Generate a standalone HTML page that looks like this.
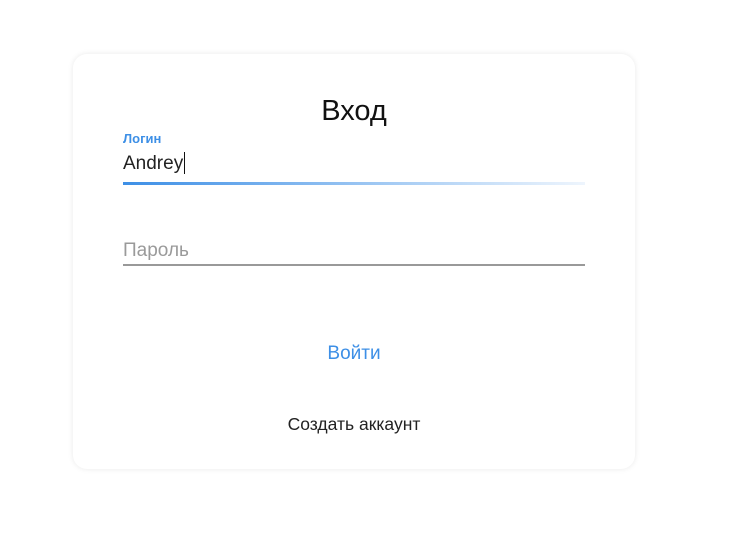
<!DOCTYPE html>
<html><head><meta charset="utf-8"><style>
body{margin:0;width:742px;height:544px;background:#fff;font-family:"Liberation Sans",sans-serif;position:relative;overflow:hidden}
.card{position:absolute;left:73px;top:54px;width:562px;height:415px;border-radius:14px;background:#fff;box-shadow:0 0 6px rgba(0,0,0,0.09)}
.t{position:absolute;white-space:nowrap}
</style></head><body>
<div class="card"></div>
<div class="t" style="left:0;width:708px;text-align:center;top:95px;font-size:29px;color:#111">Вход</div>
<div class="t" style="left:123px;top:131px;font-size:13px;font-weight:bold;color:#3d8fe6">Логин</div>
<div class="t" style="left:123px;top:153px;font-size:19px;color:#222">Andrey</div>
<div style="position:absolute;left:184px;top:152px;width:1px;height:22px;background:#111"></div>
<div style="position:absolute;left:123px;top:182px;width:462px;height:3px;background:linear-gradient(to right,#3d8fe6,#a8cdf4 60%,#eef5fd)"></div>
<div class="t" style="left:123px;top:240px;font-size:19px;color:#9a9a9a">Пароль</div>
<div style="position:absolute;left:123px;top:264px;width:462px;height:2px;background:#999"></div>
<div class="t" style="left:0;width:708px;text-align:center;top:343px;font-size:19px;color:#3d8fe6">Войти</div>
<div class="t" style="left:0;width:708px;text-align:center;top:414px;font-size:17.5px;color:#222">Создать аккаунт</div>
</body></html>
